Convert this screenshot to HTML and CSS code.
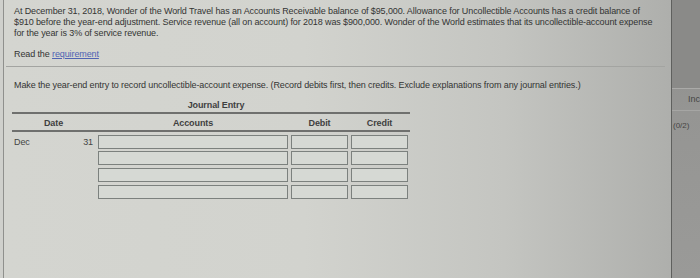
FILE: index.html
```html
<!DOCTYPE html>
<html lang="en">
<head>
    <meta charset="UTF-8">
    <meta name="viewport" content="width=device-width, initial-scale=1.0">
    <title>Journal Entry</title>
    <link rel="stylesheet" href="styles.css">
</head>

<body>
    <div class="screen">
        <div class="panel">
            <div class="question">
                <p class="intro">At December 31, 2018, Wonder of the World Travel has an Accounts Receivable balance of $95,000. Allowance for Uncollectible Accounts has a credit balance of<br>
                $910 before the year-end adjustment. Service revenue (all on account) for 2018 was $900,000. Wonder of the World estimates that its uncollectible-account expense<br>
                for the year is 3% of service revenue.</p>
                <p class="read">Read the <a href="#" class="link">requirement</a></p>
            </div>

            <div class="divider"></div>

            <p class="task">Make the year-end entry to record uncollectible-account expense. (Record debits first, then credits. Exclude explanations from any journal entries.)</p>

            <div class="journal">
                <div class="journal-title">Journal Entry</div>
                <div class="journal-head">
                    <span>Date</span>
                    <span>Accounts</span>
                    <span>Debit</span>
                    <span>Credit</span>
                </div>

                <div class="journal-row">
                    <div class="date"><span>Dec</span><span>31</span></div>
                    <input type="text" class="cell">
                    <input type="text" class="cell">
                    <input type="text" class="cell">
                </div>
                <div class="journal-row">
                    <div class="date"></div>
                    <input type="text" class="cell">
                    <input type="text" class="cell">
                    <input type="text" class="cell">
                </div>
                <div class="journal-row">
                    <div class="date"></div>
                    <input type="text" class="cell">
                    <input type="text" class="cell">
                    <input type="text" class="cell">
                </div>
                <div class="journal-row">
                    <div class="date"></div>
                    <input type="text" class="cell">
                    <input type="text" class="cell">
                    <input type="text" class="cell">
                </div>
            </div>
        </div>

        <div class="side">
            <div class="side-top"></div>
            <div class="side-label">Inc</div>
            <div class="side-score">(0/2)</div>
        </div>
    </div>
</body>
</html>
```

FILE: styles.css
```css
body {
    margin: 0;
    font-family: "Liberation Sans", Arial, sans-serif;
    background: #c9cac6;
    color: #333433;
}

.screen {
    display: flex;
    height: 278px;
    width: 700px;
    overflow: hidden;
    background: #cfd0cc;
}

.panel {
    flex: 1;
    margin-left: 3px;
    border-left: 1px solid #8f908d;
    border-right: 1px solid #5f605e;
    background: linear-gradient(90deg, #d4d5d0 0%, #d2d3ce 45%, #c4c5c1 75%, #aeafac 100%);
    font-size: 9px;
    line-height: 11px;
    letter-spacing: -0.11px;
}

.question {
    padding: 6px 4px 0 10px;
    white-space: nowrap;
}

.intro {
    margin: 0;
}

.read {
    margin: 10px 0 0 0;
}

.link {
    color: #4f63b3;
    text-decoration: underline;
}

.divider {
    height: 1px;
    margin: 6px 6px 0 2px;
    background: #a3a4a1;
}

.task {
    margin: 13px 0 0 10px;
}

.journal {
    width: 398px;
    margin: 9px 0 0 8px;
}

.journal-title {
    text-align: center;
    font-weight: bold;
    padding-left: 10px;
    color: #3f403f;
    border-bottom: 2px solid #6f706e;
    padding-bottom: 1px;
}

.journal-head {
    display: grid;
    grid-template-columns: 83px 190px 57px 57px;
    column-gap: 3px;
    font-weight: bold;
    color: #3f403f;
    text-align: center;
    padding: 4px 0 1px 0;
    border-bottom: 2px solid #6f706e;
}

.journal-row {
    display: grid;
    grid-template-columns: 83px 190px 57px 57px;
    column-gap: 3px;
    height: 14px;
    margin-top: 2.7px;
}

.journal-row:first-of-type {
    margin-top: 1px;
}

.date {
    display: flex;
    justify-content: space-between;
    padding: 2px 2px 0 2px;
    color: #444544;
}

.cell {
    box-sizing: border-box;
    height: 14px;
    margin: 0;
    border: 1.5px solid #7c817e;
    background: #d6d9d4;
    padding: 0;
}

.side {
    width: 28px;
    background: linear-gradient(180deg, #8c8c8a 0%, #959593 40%, #9a9a98 100%);
    color: #454544;
    font-size: 9px;
    line-height: 10px;
}

.side-top {
    height: 88px;
    border-bottom: 1px solid #aaaaa8;
    background: #8a8a88;
}

.side-label {
    height: 21px;
    border-bottom: 1px solid #a6a6a4;
    text-align: right;
    line-height: 21px;
}

.side-score {
    padding: 10px 0 0 1px;
    font-size: 8px;
}
```
